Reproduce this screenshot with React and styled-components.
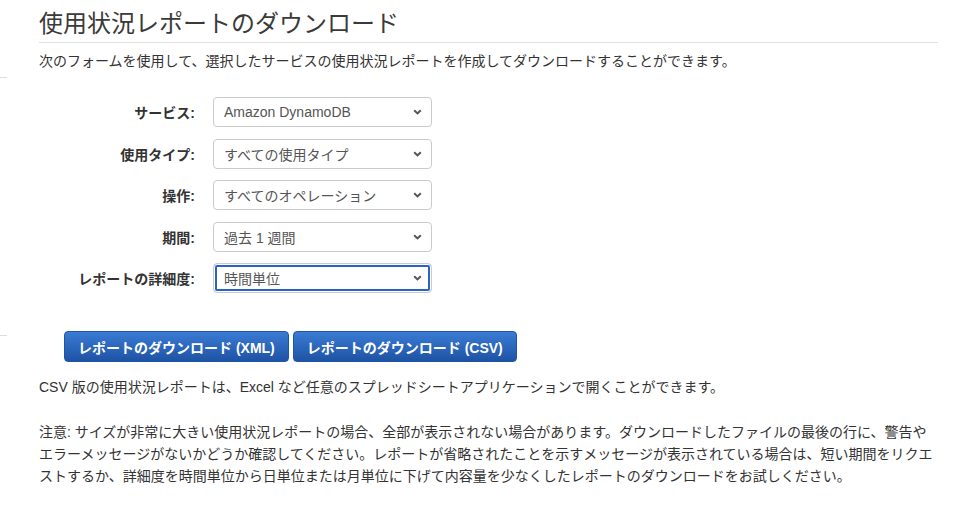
import React from 'react';
import styled, { createGlobalStyle } from 'styled-components';

const GlobalStyle = createGlobalStyle`
  body {
    margin: 0;
    background: #fff;
    font-family: 'Liberation Sans', 'Noto Sans CJK JP', sans-serif;
    color: #333;
  }
`;

const Page = styled.div`
  display: flex;
  width: 960px;
  min-height: 505px;
`;

const Gutter = styled.div`
  display: flex;
  flex-direction: column;
  width: 7px;
  flex-shrink: 0;
`;

const Tick = styled.div`
  height: 1px;
  background: #dedede;
  margin-top: ${(p) => p.$offset}px;
`;

const Main = styled.div`
  flex: 1;
  padding: 8px 22px 0 32px;
`;

const Title = styled.h1`
  margin: 0;
  font-size: 24px;
  line-height: 32px;
  font-weight: 400;
  color: #3a3a3a;
  padding-bottom: 2px;
  border-bottom: 1px solid #e1e1e1;
`;

const Text = styled.p`
  margin: ${(p) => p.$top || 0}px 0 0;
  font-size: 14px;
  line-height: 22px;
  color: #333;
`;

const Form = styled.div`
  display: grid;
  grid-template-columns: 156px 219px;
  grid-auto-rows: 30px;
  column-gap: 18px;
  row-gap: 11.6px;
  align-items: center;
  margin-top: 25px;
`;

const FieldLabel = styled.label`
  text-align: right;
  font-size: 14px;
  font-weight: 700;
  color: #333;
`;

const SelectBox = styled.div`
  display: flex;
  align-items: center;
  justify-content: space-between;
  height: 30px;
  box-sizing: border-box;
  padding: 0 9px 0 10px;
  border: 1px solid #cbcbcb;
  border-radius: 4px;
  background: #fff;
  font-size: 14px;
  color: #555;
  box-shadow: ${(p) =>
    p.$focused ? 'inset 0 0 0 1px #fff, inset 0 0 0 3px #2a62c8' : 'none'};
`;

const ButtonRow = styled.div`
  display: flex;
  gap: 4px;
  margin: 38px 0 0 25px;
`;

const Button = styled.button`
  height: 31px;
  padding: 0 13px;
  border: 1px solid #1f55a5;
  border-radius: 4px;
  background: linear-gradient(#3b7bd4, #1e53a5);
  color: #fff;
  font-family: inherit;
  font-size: 14px;
  font-weight: 700;
  cursor: pointer;
`;

const Chevron = () => (
  <svg width="9" height="6" viewBox="0 0 9 6">
    <path d="M1.2 1.2l3.3 3.2 3.3-3.2" fill="none" stroke="#555" strokeWidth="2" />
  </svg>
);

const fields = [
  { label: 'サービス:', value: 'Amazon DynamoDB' },
  { label: '使用タイプ:', value: 'すべての使用タイプ' },
  { label: '操作:', value: 'すべてのオペレーション' },
  { label: '期間:', value: '過去 1 週間' },
  { label: 'レポートの詳細度:', value: '時間単位', focused: true },
];

export default function App() {
  return (
    <>
      <GlobalStyle />
      <Page>
        <Gutter>
          <Tick $offset={77} />
          <Tick $offset={257} />
        </Gutter>
        <Main>
          <Title>使用状況レポートのダウンロード</Title>
          <Text $top={7}>
            次のフォームを使用して、選択したサービスの使用状況レポートを作成してダウンロードすることができます。
          </Text>
          <Form>
            {fields.map((f) => (
              <React.Fragment key={f.label}>
                <FieldLabel>{f.label}</FieldLabel>
                <SelectBox $focused={f.focused}>
                  <span>{f.value}</span>
                  <Chevron />
                </SelectBox>
              </React.Fragment>
            ))}
          </Form>
          <ButtonRow>
            <Button>レポートのダウンロード (XML)</Button>
            <Button>レポートのダウンロード (CSV)</Button>
          </ButtonRow>
          <Text $top={14}>
            CSV 版の使用状況レポートは、Excel など任意のスプレッドシートアプリケーションで開くことができます。
          </Text>
          <Text $top={23}>
            注意: サイズが非常に大きい使用状況レポートの場合、全部が表示されない場合があります。ダウンロードしたファイルの最後の行に、警告や
            <br />
            エラーメッセージがないかどうか確認してください。レポートが省略されたことを示すメッセージが表示されている場合は、短い期間をリクエ
            <br />
            ストするか、詳細度を時間単位から日単位または月単位に下げて内容量を少なくしたレポートのダウンロードをお試しください。
          </Text>
        </Main>
      </Page>
    </>
  );
}
